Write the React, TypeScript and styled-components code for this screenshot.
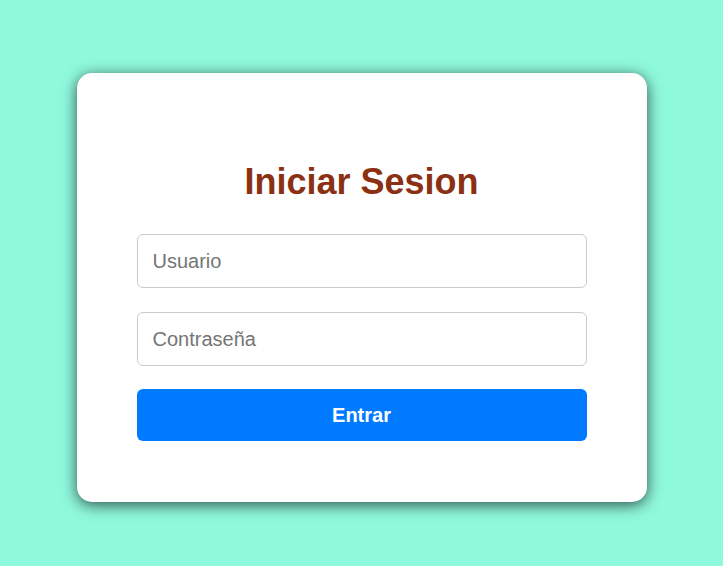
import React from 'react';
import styled, { createGlobalStyle } from 'styled-components';

const GlobalStyle = createGlobalStyle`
  html, body {
    margin: 0;
    padding: 0;
    background: #8ff9de;
    font-family: "Liberation Sans", Arial, sans-serif;
  }
`;

const Page = styled.div`
  box-sizing: border-box;
  min-height: 100vh;
  padding-top: 9px;
  display: flex;
  align-items: center;
  justify-content: center;
`;

const Card = styled.form`
  box-sizing: border-box;
  width: 570px;
  padding: 60px 60px 61px;
  background: #fff;
  border-radius: 15px;
  box-shadow: 0 3px 15px rgba(0, 0, 0, 0.68);
  display: flex;
  flex-direction: column;
`;

const Title = styled.h1`
  margin: 28px 0 32px;
  font-size: 36px;
  line-height: 41px;
  font-weight: 700;
  color: #8b3013;
  text-align: center;
`;

const Field = styled.input<{ $gap: number }>`
  box-sizing: border-box;
  width: 100%;
  height: 54px;
  margin-bottom: ${(p) => p.$gap}px;
  padding: 0 15px;
  border: 1px solid #cccccc;
  border-radius: 6px;
  font-family: inherit;
  font-size: 20px;
  color: #333;
  outline: none;

  &::placeholder {
    color: #757575;
  }
`;

const SubmitButton = styled.button`
  height: 52px;
  border: none;
  border-radius: 6px;
  background: #007bff;
  color: #fff;
  font-family: inherit;
  font-size: 20px;
  font-weight: 700;
  cursor: pointer;
`;

export default function App() {
  return (
    <>
      <GlobalStyle />
      <Page>
        <Card onSubmit={(e) => e.preventDefault()}>
          <Title>Iniciar Sesion</Title>
          <Field $gap={24} type="text" placeholder="Usuario" />
          <Field $gap={23} type="password" placeholder="Contraseña" />
          <SubmitButton type="submit">Entrar</SubmitButton>
        </Card>
      </Page>
    </>
  );
}
